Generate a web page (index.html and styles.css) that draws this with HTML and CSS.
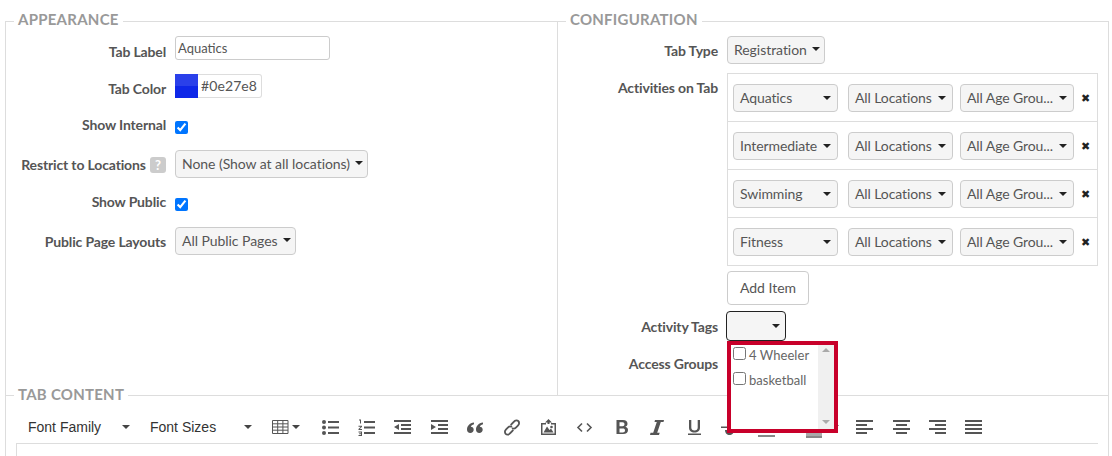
FILE: index.html
```html
<!DOCTYPE html>
<html lang="en">
<head>
<meta charset="utf-8">
<title>Tab settings</title>
<link rel="stylesheet" href="styles.css">
</head>
<body>
<div class="page">
  <div class="top">
    <fieldset class="panel panel-left">
      <legend>APPEARANCE</legend>
      <div class="row row-label"><label class="lbl">Tab Label</label><div class="input input-label">Aquatics</div></div>
      <div class="row row-color"><label class="lbl">Tab Color</label><div class="color"><span class="swatch"></span><span class="hex">#0e27e8</span></div></div>
      <div class="row row-check"><label class="lbl lbl-up">Show Internal</label><input class="chk" type="checkbox" checked></div>
      <div class="row row-select"><label class="lbl">Restrict to Locations <span class="help">?</span></label><div class="select">None (Show at all locations)<i class="caret"></i></div></div>
      <div class="row row-check row-public"><label class="lbl lbl-up">Show Public</label><input class="chk" type="checkbox" checked></div>
      <div class="row row-select row-layouts"><label class="lbl">Public Page Layouts</label><div class="select">All Public Pages<i class="caret"></i></div></div>
    </fieldset>
    <fieldset class="panel panel-right">
      <legend>CONFIGURATION</legend>
      <div class="row row-type"><label class="lbl">Tab Type</label><div class="select">Registration<i class="caret"></i></div></div>
      <div class="row row-activities">
        <label class="lbl lbl-top">Activities on Tab</label>
        <div class="activity-list">
          <div class="activity"><div class="select s1">Aquatics<i class="caret"></i></div><div class="select s2">All Locations<i class="caret"></i></div><div class="select s3">All Age Grou...<i class="caret"></i></div><span class="remove">&#10006;</span></div>
          <div class="activity"><div class="select s1">Intermediate<i class="caret"></i></div><div class="select s2">All Locations<i class="caret"></i></div><div class="select s3">All Age Grou...<i class="caret"></i></div><span class="remove">&#10006;</span></div>
          <div class="activity"><div class="select s1">Swimming<i class="caret"></i></div><div class="select s2">All Locations<i class="caret"></i></div><div class="select s3">All Age Grou...<i class="caret"></i></div><span class="remove">&#10006;</span></div>
          <div class="activity"><div class="select s1">Fitness<i class="caret"></i></div><div class="select s2">All Locations<i class="caret"></i></div><div class="select s3">All Age Grou...<i class="caret"></i></div><span class="remove">&#10006;</span></div>
        </div>
      </div>
      <div class="row row-add"><span class="lbl"></span><div class="btn">Add Item</div></div>
      <div class="row row-tags"><label class="lbl">Activity Tags</label>
        <div class="tags-wrap">
          <div class="select tags"><i class="caret"></i></div>
          <div class="popup">
            <div class="popup-list">
              <div class="opt"><input class="opt-chk" type="checkbox"><span>4 Wheeler</span></div>
              <div class="opt opt2"><input class="opt-chk" type="checkbox"><span>basketball</span></div>
            </div>
            <div class="scroll"><i class="arrow-up"></i><i class="arrow-down"></i></div>
          </div>
        </div>
      </div>
      <div class="row row-access"><label class="lbl">Access Groups</label></div>
    </fieldset>
  </div>
  <fieldset class="panel panel-content">
    <legend>TAB CONTENT</legend>
    <div class="toolbar">
      <div class="tb-select tb-family">Font Family<i class="caret"></i></div>
      <div class="tb-select tb-sizes">Font Sizes<i class="caret"></i></div>
      <div class="tb-btn tb-table">
        <svg width="17" height="14" viewBox="0 0 17 14"><path d="M.5.5h15.500v13H.5zM.5 3.800h15.500M.5 7h15.500M.5 10.200h15.500M5.700.5v13M10.900.5v13" fill="none" stroke="#555" stroke-width="1"/></svg><i class="caret"></i>
      </div>
      <div class="tb-btn"><svg class="ic" viewBox="0 0 17 17"><circle cx="2" cy="3" r="2"/><circle cx="2" cy="8.500" r="2"/><circle cx="2" cy="14" r="2"/><path d="M6 2h11v2H6zM6 7.500h11v2H6zM6 13h11v2H6z"/></svg></div>
      <div class="tb-btn"><svg class="ic" viewBox="0 0 17 17"><path d="M6 2h11v2H6zM6 7.500h11v2H6zM6 13h11v2H6z"/><path d="M1 .6h2v4H2V1.600H1zM.5 6.800h3.500v1L1.800 10H4v1H.5v-1L2.800 7.800H.5zM.5 12.500H4v4.500H.5v-1h2.500v-.8H1.200v-1H3v-.7H.5z"/></svg></div>
      <div class="tb-btn"><svg class="ic" viewBox="0 0 17 17"><path d="M0 1h17v2H0zM7 5h10v2H7zM7 9h10v2H7zM0 13h17v2H0zM5 5v6L0 8z"/></svg></div>
      <div class="tb-btn"><svg class="ic" viewBox="0 0 17 17"><path d="M0 1h17v2H0zM7 5h10v2H7zM7 9h10v2H7zM0 13h17v2H0zM0 5v6l5-3z"/></svg></div>
      <div class="tb-btn"><svg class="ic" viewBox="0 0 17 17"><path d="M7 3.500C2.500 4 0 7 0 10.500c0 2 1.300 3.500 3.300 3.500S6.700 12.600 6.700 10.800 5.500 7.800 3.800 7.800c.3-1.100 1.500-2.100 3.200-2.500zM16 3.500C11.500 4 9 7 9 10.500c0 2 1.300 3.500 3.300 3.500s3.400-1.400 3.400-3.200-1.200-3-2.900-3c.3-1.100 1.500-2.100 3.200-2.500z"/></svg></div>
      <div class="tb-btn"><svg class="ic ic-line ic-link" viewBox="0 0 17 17"><path d="M7.700 6.200 9.500 4.200C10.800 2.800 11.500 1.400 13.300 1.400c1.700 0 2.800 1.300 2.800 2.800 0 1-.5 1.700-1.200 2.400l-2 2c-1.200 1.200-2.700 1.200-3.800.2M10.300 10.800 8.500 12.800c-1.300 1.400-2 2.800-3.800 2.800-1.700 0-2.800-1.300-2.800-2.800 0-1 .5-1.700 1.200-2.400l2-2c1.200-1.200 2.700-1.200 3.800-.2"/></svg></div>
      <div class="tb-btn"><svg class="ic" viewBox="-1 0 17 17"><path d="M8.500 0 12 3.500H9.500V5h-2V3.500H5z"/><path fill-rule="evenodd" d="M1 4h5v1.500H2.500v9h12v-9H11V4h5v12H1z"/><circle cx="11.500" cy="8" r="1.300"/><path d="M3.500 13.500 7 7.500l2.500 3.500 1.500-1.500 2.500 4z"/></svg></div>
      <div class="tb-btn"><svg class="ic ic-line ic-code" viewBox="0 0 17 17"><path d="M6 4.500 2 8.500l4 4M11 4.500l4 4-4 4"/></svg></div>
      <div class="tb-btn"><svg class="ic" viewBox="-1.500 0 17 17"><path fill-rule="evenodd" d="M3 1h6.500c3 0 4.500 1.500 4.500 3.700 0 1.500-.8 2.600-2.200 3.100 1.700.4 2.700 1.600 2.700 3.300 0 2.500-1.800 3.900-4.800 3.900H3zM6 3.300v4h3c1.300 0 2-.7 2-2s-.7-2-2-2zM6 9.500v3.900h3.300c1.400 0 2.200-.7 2.200-2s-.8-1.900-2.200-1.900z"/></svg></div>
      <div class="tb-btn"><svg class="ic" viewBox="0 0 17 17"><path d="M7 1h9l-.5 2h-2.700l-3.600 10.800h2.500L11 16H2l.5-2.200h2.700L8.800 3H6.500z"/></svg></div>
      <div class="tb-btn"><svg class="ic" viewBox="-1 0 17 17"><path d="M3 1h2.300v7.500c0 2 1.200 3 3.200 3s3.200-1 3.200-3V1H14v7.500c0 3.300-2.200 5-5.500 5S3 11.800 3 8.500zM2 14.500h13V16H2z"/></svg></div>
      <div class="tb-btn"><svg class="ic" viewBox="0 0 17 17"><path d="M0 7.500h17v1.500H0z"/><path d="M4 11h9c0 3-2 5-4.500 5S4 14 4 11z"/></svg></div>
      <div class="tb-btn tb-color"><span class="under"></span></div>
      <div class="tb-btn tb-bg"><span class="under-bg"></span><i class="caret"></i></div>
      <div class="tb-btn"><svg class="ic" viewBox="0 0 17 17"><path d="M0 1h17v2H0zM0 5h11v2H0zM0 9h17v2H0zM0 13h11v2H0z"/></svg></div>
      <div class="tb-btn"><svg class="ic" viewBox="0 0 17 17"><path d="M0 1h17v2H0zM3 5h11v2H3zM0 9h17v2H0zM3 13h11v2H3z"/></svg></div>
      <div class="tb-btn"><svg class="ic" viewBox="0 0 17 17"><path d="M0 1h17v2H0zM6 5h11v2H6zM0 9h17v2H0zM6 13h11v2H6z"/></svg></div>
      <div class="tb-btn"><svg class="ic" viewBox="0 0 17 17"><path d="M0 1h17v2H0zM0 5h17v2H0zM0 9h17v2H0zM0 13h17v2H0z"/></svg></div>
    </div>
    <div class="editor"></div>
  </fieldset>
</div>
</body>
</html>
```
FILE: styles.css
```css
* { box-sizing: border-box; }
html, body { margin: 0; padding: 0; height: 456px; overflow: hidden; background: #fff; }
body { font-family: "Lato", sans-serif; font-size: 14px; color: #555; }
.page { width: 1104px; margin-left: 5px; }
.top { display: flex; height: 386px; padding-top: 11px; }
.panel { margin: 0; padding: 0; border: 1px solid #ddd; border-bottom: 0; min-width: 0; }
.panel legend { margin-left: 8px; padding: 0 4px; font-size: 15px; font-weight: 700; letter-spacing: .25px; color: #999; line-height: 17px; height: 21px; }
.panel-left { width: 552px; border-right: 0; height: 385px; }
.panel-right { width: 552px; height: 385px; }
.panel-content { width: 1104px; height: 70px; position: relative; }
.panel-content legend { height: 19px; }
.row { display: flex; align-items: center; }
.lbl { flex: none; width: 160px; margin-right: 9px; text-align: right; font-weight: 700; color: #555; letter-spacing: -.15px; white-space: nowrap; }
.lbl-up { padding-bottom: 6px; }
.lbl-top { align-self: flex-start; padding-top: 6px; }
.row-label { margin-top: 4px; height: 24px; }
.row-label .lbl { padding-top: 6px; }
.input-label { width: 155px; height: 24px; border: 1px solid #ccc; border-radius: 3px; padding-left: 2px; line-height: 22px; font-size: 13px; color: #555; }
.row-color { margin-top: 14px; height: 24px; }
.row-color .lbl { padding-top: 4px; }
.color { display: flex; height: 24px; width: 87px; border: 1px solid #ddd; border-left: 0; border-radius: 3px; }
.swatch { width: 23px; margin-top: -1px; height: 24px; background: linear-gradient(#2a40ea 50%, #0e27e8 50%); }
.hex { padding-left: 3px; line-height: 22px; color: #555; letter-spacing: .1px; }
.row-check { margin-top: 20px; height: 18px; }
.chk { width: 13px; height: 13px; margin: 1px 0 0; accent-color: #0075ff; }
.row-select { margin-top: 14px; height: 28px; }
.row-public { margin-top: 17px; }
.row-layouts { margin-top: 14px; }
.select { display: flex; align-items: center; height: 28px; padding: 0 4px 2px 6px; background: #f5f5f5; border: 1px solid #ccc; border-radius: 4px; color: #555; white-space: nowrap; letter-spacing: -.05px; }
.caret { flex: none; width: 0; height: 0; margin-left: 5px; border-left: 4px solid transparent; border-right: 4px solid transparent; border-top: 4px solid #222; }
.help { display: inline-block; width: 16px; height: 16px; line-height: 16px; border-radius: 3px; background: #ccc; color: #fff; font-size: 13px; text-align: center; margin-left: 1px; }
.row-type { margin-top: 4px; }
.row-activities { align-items: flex-start; margin-top: 9px; }
.activity-list { width: 371px; border: 1px solid #ddd; }
.activity { display: flex; align-items: center; height: 48px; padding-left: 5px; border-bottom: 1px solid #ddd; }
.activity:last-child { border-bottom: 0; height: 47px; }
.s1 { width: 105px; }
.s2 { width: 105px; margin-left: 10px; }
.s3 { width: 114px; margin-left: 7px; }
.activity .select { justify-content: space-between; padding: 0 6px; letter-spacing: -.1px; }
.remove { margin-left: 5px; font-size: 11px; color: #222; width: 12px; text-align: center; }
.row-add { margin-top: 5px; height: 34px; }
.btn { width: 82px; height: 34px; border: 1px solid #ccc; border-radius: 4px; text-align: center; line-height: 32px; color: #555; }
.row-tags { margin-top: 6px; height: 30px; }
.row-tags .lbl { margin-right: 8px; }
.tags-wrap { position: relative; }
.tags { width: 60px; height: 30px; border: 1px solid #222; background: #f5f5f5; justify-content: flex-end; padding: 0 5px 0 0; }
.popup { position: absolute; z-index: 5; left: 1px; top: 30px; width: 111px; height: 92px; background: #fff; border: 4px solid #c8002a; display: flex; }
.popup-list { flex: 1; margin-top: -3px; }
.opt { display: flex; align-items: center; height: 25px; color: #666; font-size: 13px; letter-spacing: .05px; }
.opt-chk { width: 13px; height: 13px; margin: -2px 3px 0 2px; }
.scroll { width: 16px; background: #f0f0f0; position: relative; }
.arrow-up, .arrow-down { position: absolute; left: 4px; width: 0; height: 0; border-left: 4px solid transparent; border-right: 4px solid transparent; }
.arrow-up { top: 3px; border-bottom: 4px solid #aaa; }
.arrow-down { bottom: 5px; border-top: 4px solid #aaa; }
.row-access { margin-top: 7px; height: 30px; }
.toolbar { display: flex; align-items: center; height: 32px; margin: 6px 10px 0 10px; }
.tb-select { display: flex; align-items: center; justify-content: space-between; flex: none; width: 122px; padding: 0 8px 0 12px; font-family: "Liberation Sans", Arial, sans-serif; font-size: 14px; color: #333; }
.tb-select .caret, .tb-table .caret { border-top-color: #444; }
.tb-btn { flex: none; width: 36.3px; height: 32px; display: flex; align-items: center; justify-content: center; }
.tb-table { width: 52px; justify-content: flex-start; padding-left: 12px; }
.tb-table .caret { margin-left: 3px; }
.ic { width: 17px; height: 17px; fill: #555; }
.ic-line { fill: none; stroke: #555; stroke-width: 2; }
.ic-code { stroke-width: 1.600; }
.ic-link { stroke-width: 1.800; }
.tb-color { width: 49.5px; justify-content: flex-start; padding-left: 10px; }
.under { width: 17px; height: 2px; background: #888; margin-top: 18px; }
.tb-bg { width: 49.5px; justify-content: flex-start; padding-left: 9px; }
.under-bg { width: 16px; height: 5px; background: linear-gradient(#aaa 60%, #888 60%); margin-top: 16px; }
.tb-bg .caret { margin-left: 9px; border-top-color: #444; }
.editor { margin: 0 10px; height: 14px; border: 1px solid #ddd; border-bottom: 0; border-right: 0; }
```
